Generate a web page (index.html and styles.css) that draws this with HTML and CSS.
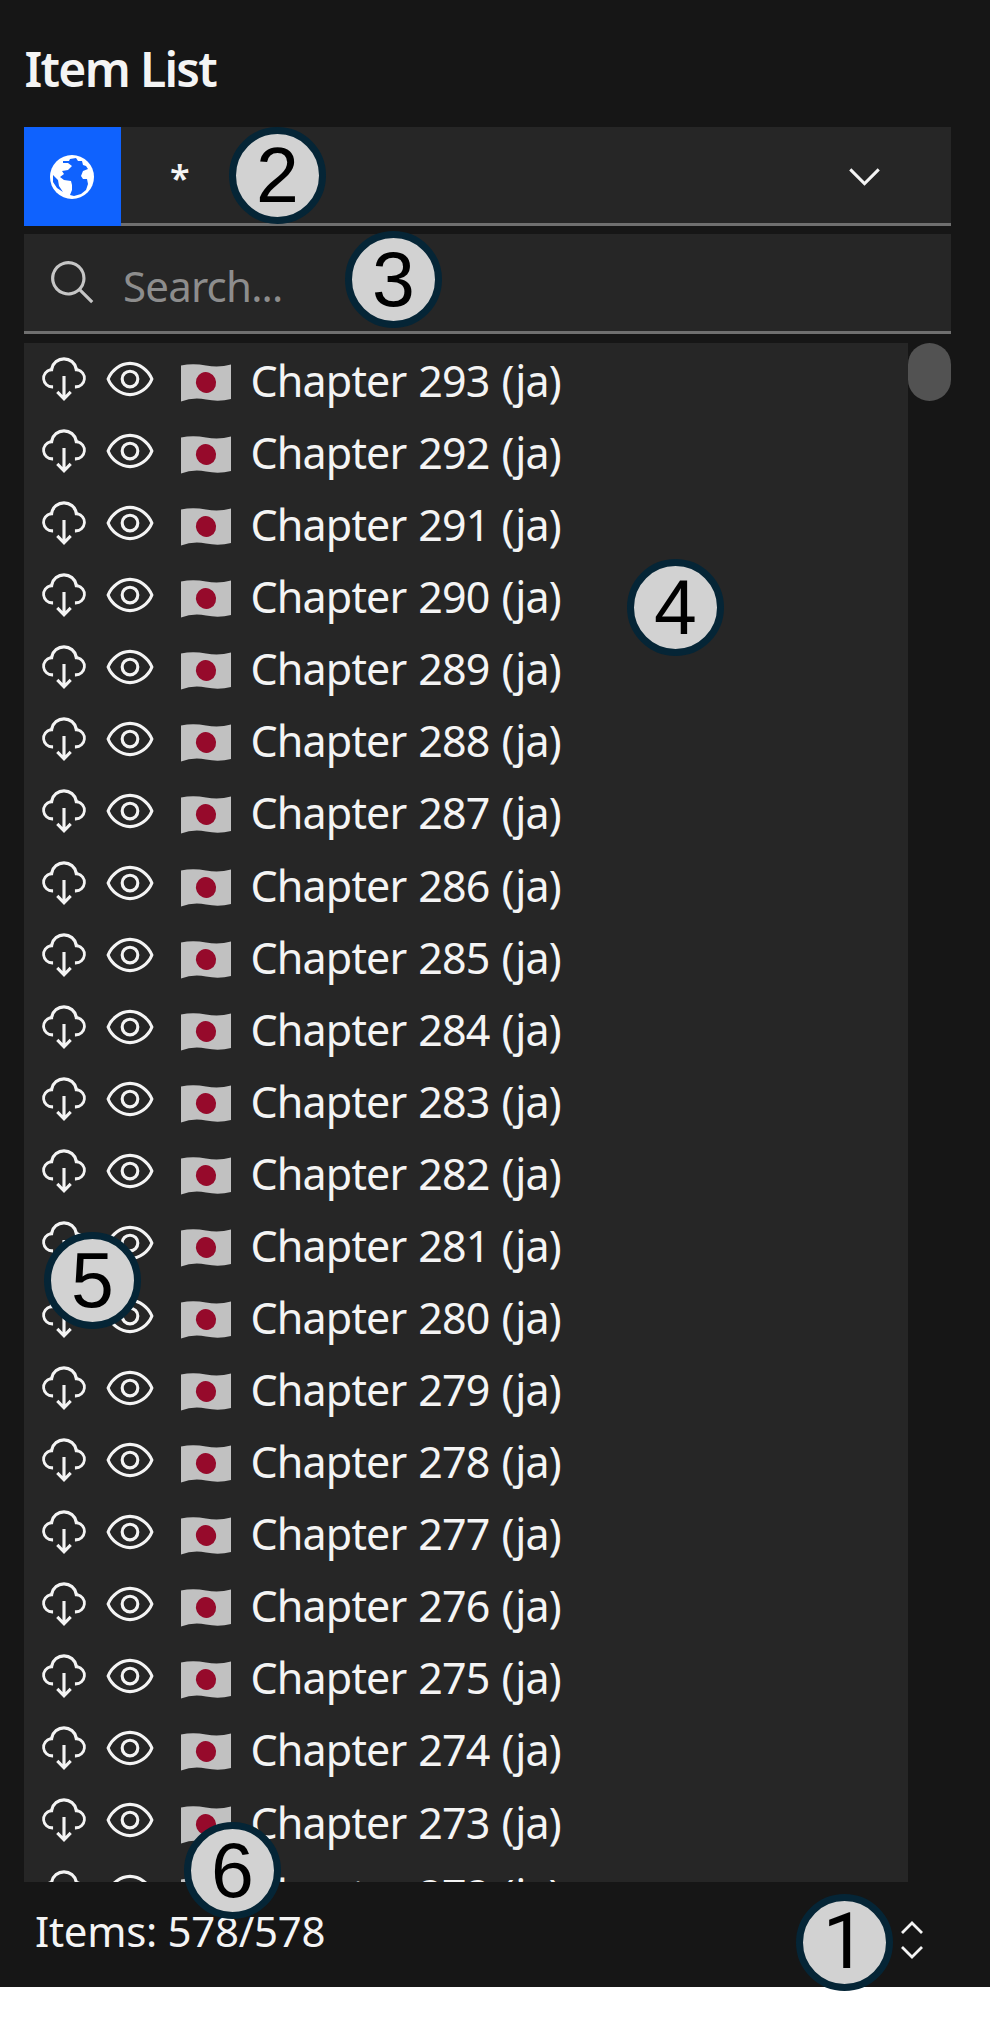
FILE: index.html
```
<!DOCTYPE html>
<html lang="en">
<head>
<meta charset="utf-8">
<title>Item List</title>
<link rel="stylesheet" href="styles.css">
</head>
<body>
<svg class="sprite" aria-hidden="true">
<symbol id="cloud" viewBox="0 0 32 32"><path d="M23.5 22H23V20h.5a4.5 4.5 0 00.36-9L23 11l-.1-.82a7 7 0 00-13.88 0L9 11 8.14 11a4.5 4.5 0 00.36 9H9v2H8.5A6.5 6.5 0 017.2 9.14a9 9 0 0117.6 0A6.5 6.5 0 0123.5 22z"/><path d="M17 26.17V14H15V26.17L12.41 23.59 11 25l5 5 5-5-1.41-1.41z"/></symbol>
<symbol id="eye" viewBox="0 0 32 32"><path d="M30.94 15.66A16.69 16.69 0 0016 5 16.69 16.69 0 001.06 15.66a1 1 0 000 .68A16.69 16.69 0 0016 27 16.69 16.69 0 0030.94 16.34a1 1 0 000-.68zM16 25c-5.3 0-10.9-3.93-12.93-9C5.1 10.93 10.7 7 16 7s10.9 3.93 12.93 9C26.9 21.07 21.3 25 16 25z"/><path d="M16 10a6 6 0 106 6 6 6 0 00-6-6zm0 10a4 4 0 114-4 4 4 0 01-4 4z"/></symbol>
<symbol id="flag" viewBox="0 0 50 38"><path fill="#c1c1c1" d="M0 1.5Q12-1 25 1.5T50 .5V35Q38 38 25 35.5T0 37.5z"/><ellipse cx="25" cy="18.5" rx="10" ry="10.6" transform="rotate(-25 25 18.5)" fill="#960a2b"/></symbol>
</svg>
<main class="panel">
<h1 class="title">Item List</h1>
<div class="select">
<div class="globe"><svg viewBox="0 0 44 44"><circle cx="22" cy="22" r="22" fill="#fff"/><path fill="#0f62fe" d="M13 6L19 6 20 4 26 3 28 6 32 6 33 10 36 11 38 14 33 16 31 21 33 24 37 24 38 29 36 35 31 39 24 41 20 40 22 35 22 30 21 26 14 25 10 22 14 19 12 16 18 15 22 11 18 8 13 8zM3 20L8 25 9 31 13 37 7 33 3 27z"/></svg></div>
<div class="value"><span>*</span><svg class="chevron" viewBox="0 0 16 16"><path d="M8 11L3 6l.7-.7L8 9.6l4.3-4.3.7.7z"/></svg></div>
</div>
<div class="search"><svg viewBox="0 0 32 32"><path d="M29 27.586l-7.552-7.552a11.018 11.018 0 10-1.414 1.414L27.586 29zM4 13a9 9 0 119 9A9.01 9.01 0 014 13z"/></svg><span>Search...</span></div>
<div class="body"><div class="list" id="list"></div><div class="thumb"></div></div>
<footer class="footer"><span>Items: 578/578</span><svg viewBox="0 0 22 38"><path d="M1 12L11 2l10 10M1 26l10 10 10-10"/></svg></footer>
</main>
<div class="badge b1">1</div><div class="badge b2">2</div><div class="badge b3">3</div><div class="badge b4">4</div><div class="badge b5">5</div><div class="badge b6">6</div>
<script src="list.js"></script>
</body>
</html>
```
FILE: styles.css
```
* { box-sizing: border-box; }
body { margin: 0; background: #fff; position: relative; font-family: "Noto Sans", sans-serif; color: #f4f4f4; height: 2041px; overflow: hidden; }
svg { fill: currentColor; display: block; flex: none; }
.sprite { position: absolute; width: 0; height: 0; }
.panel { height: 1987px; background: #161616; padding: 0 39px 0 24px; display: flex; flex-direction: column; }
.title { margin: 0; height: 127px; padding: 36px 0 0 .5px; font-size: 48px; line-height: 66px; font-weight: 600; white-space: nowrap; letter-spacing: -1.7px; }
.select { height: 99px; display: flex; margin-bottom: 8px; }
.globe { width: 97px; background: #0f62fe; display: flex; align-items: center; justify-content: center; padding-right: 1px; }
.globe svg { width: 44px; height: 44px; }
.value { flex: 1; background: #262626; border-bottom: 3px solid #6f6f6f; display: flex; justify-content: space-between; padding: 0 62px 0 49px; font-size: 36px; line-height: 102px; }
.value span { font-weight: 600; }
.chevron { width: 49px; height: 49px; margin-top: 25px; }
.search { height: 100px; background: #262626; border-bottom: 3px solid #6f6f6f; display: flex; padding-left: 24px; color: #8d8d8d; font-size: 42px; line-height: 104px; margin-bottom: 9px; }
.search svg { width: 50px; height: 50px; margin: 24px 25px 0 0; color: #c6c6c6; }
.search span { letter-spacing: -.8px; }
.body { height: 1539px; display: flex; }
.list { width: 884px; background: #262626; overflow: hidden; }
.thumb { width: 43px; height: 58px; border-radius: 22px; background: #525252; }
.row { height: 72.08px; display: flex; padding-left: 14.5px; font-size: 43px; line-height: 76px; white-space: nowrap; }
.row .icon { width: 50px; height: 50px; margin: 10.5px 16px 0 0; }
.row .flag { width: 50px; height: 38px; margin: 21px 19.5px 0 10.5px; }
.row span { letter-spacing: -.85px; word-spacing: 1.6px; }
.footer { flex: 1; display: flex; justify-content: space-between; padding: 0 28px 0 11px; font-size: 42px; line-height: 98px; }
.footer span { letter-spacing: -.3px; }
.footer svg { width: 22px; height: 38px; margin-top: 39px; fill: none; stroke: #f4f4f4; stroke-width: 2.8; }
.badge { position: absolute; width: 97px; height: 97px; border: 7px solid #052536; border-radius: 50%; background: #d2d2d2; color: #000; font: 77px/83px "Liberation Sans", sans-serif; text-align: center; }
.b1 { left: 796px; top: 1894px; font-family: Roboto, sans-serif; }
.b2 { left: 229px; top: 127px; }
.b3 { left: 345px; top: 231px; }
.b4 { left: 627px; top: 559px; }
.b5 { left: 44px; top: 1232px; }
.b6 { left: 184px; top: 1822px; }
```
FILE: list.js
```
const list = document.getElementById('list');
for (let n = 293; n >= 272; n--) {
  list.insertAdjacentHTML('beforeend', `<div class="row"><svg class="icon"><use href="#cloud"/></svg><svg class="icon"><use href="#eye"/></svg><svg class="flag"><use href="#flag"/></svg><span>Chapter ${n} (ja)</span></div>`);
}
```
